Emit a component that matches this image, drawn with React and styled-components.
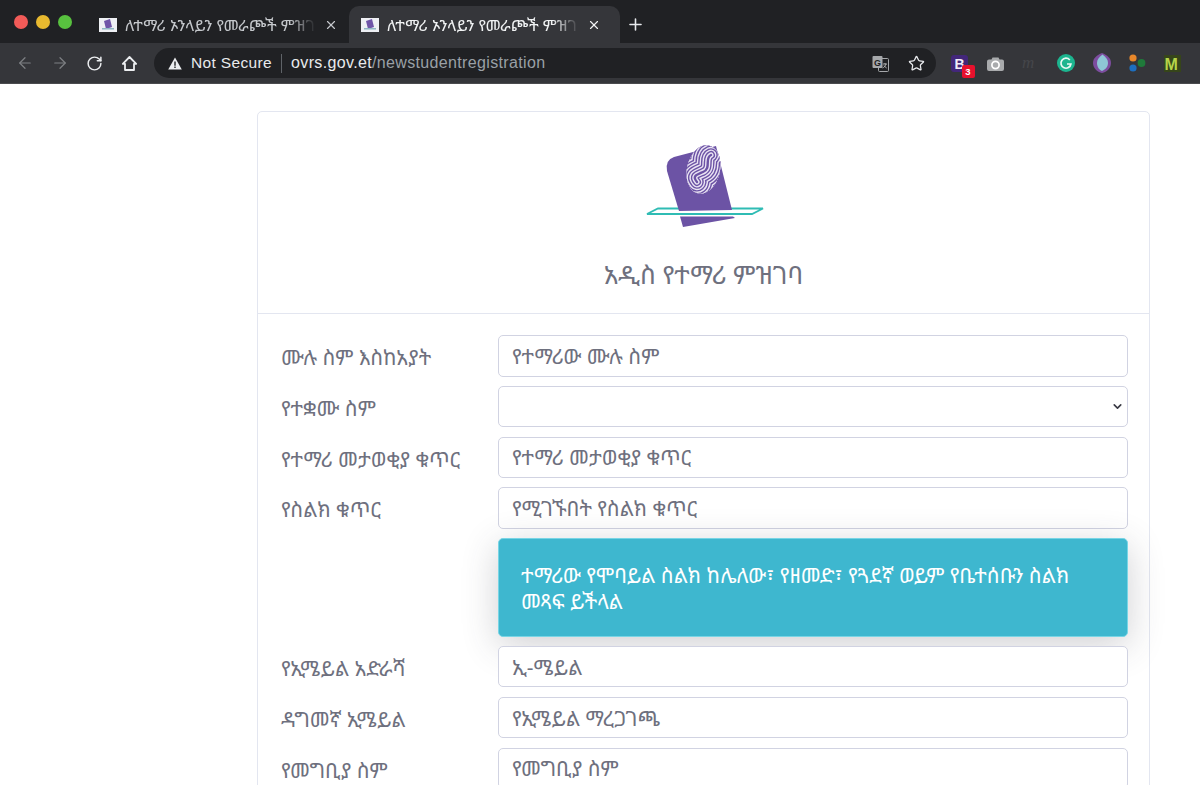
import React from 'react';
import styled, { createGlobalStyle } from 'styled-components';
import { ArrowLeft, ArrowRight, RotateCw, Star, X, Plus, ChevronDown } from 'lucide-react';

const Global = createGlobalStyle`
  html, body { margin: 0; padding: 0; background: #fff; height: 785px; overflow: hidden; }
  * { box-sizing: border-box; }
  body { font-family: "Noto Sans", "Noto Sans Ethiopic", "DejaVu Sans", "Liberation Sans", sans-serif; }
`;

const Frame = styled.div`width: 1200px; height: 785px; overflow: hidden; display: flex; flex-direction: column;`;
const TabStrip = styled.div`height: 43px; background: #202124; display: flex; align-items: flex-end; padding-left: 14px; flex: none;`;
const Lights = styled.div`display: flex; gap: 8px; align-self: flex-start; margin-top: 15px; width: 73px; flex: none;`;
const Light = styled.span`width: 14px; height: 14px; border-radius: 50%; background: ${p => p.$c};`;
const Tab = styled.div`
  width: ${p => p.$active ? '271px' : '262px'}; height: 37px; display: flex; align-items: center; padding: 0 ${p => p.$active ? '19px' : '11px'} 0 12px; gap: 8px;
  background: ${p => p.$active ? '#35363a' : 'transparent'};
  border-radius: 10px 10px 0 0; color: ${p => p.$active ? '#f1f3f4' : '#c5c8cc'};
`;
const TabTitle = styled.span`
  flex: 1; white-space: nowrap; font-size: 16px; line-height: 22px;
  mask-image: linear-gradient(90deg, #000 86%, transparent 100%);
`;
const Fav = styled.svg`width: 18px; height: 14px; flex: none;`;
const NewTab = styled.div`margin-left: 6px; height: 37px; display: flex; align-items: center; color: #e8eaed;`;
const Toolbar = styled.div`height: 41px; background: #35363a; border-bottom: 1px solid #4a4b4e; display: flex; align-items: center; flex: none; padding-left: 7px;`;
const NavIcons = styled.div`display: flex; align-items: center; width: 147px; flex: none;`;
const NavBtn = styled.span`display: flex; justify-content: center; width: 35px; color: ${p => p.$dim ? '#7e8084' : '#eceef0'};`;
const Omni = styled.div`
  width: 782px; height: 30px; border-radius: 15px; background: #202124; display: flex; align-items: center; padding: 0 11px 0 14px; flex: none;
  font-family: "Liberation Sans", sans-serif; font-size: 15.5px; letter-spacing: .35px;
`;
const Secure = styled.span`color: #e8eaed; margin-left: 9px;`;
const Sep = styled.span`width: 1px; height: 19px; background: #5f6368; margin: 0 9px;`;
const Host = styled.span`color: #e8eaed; font-size: 16px;`;
const UrlPath = styled.span`color: #9aa0a6; flex: 1; font-size: 16px;`;
const OmniEnd = styled.div`display: flex; align-items: center; gap: 19px; color: #e8eaed;`;
const Exts = styled.div`display: flex; align-items: center; flex: 1; padding-left: 6px;`;
const Ext = styled.div`width: 35.5px; height: 24px; flex: none; display: flex; align-items: center; justify-content: center; position: relative;`;
const Badge = styled.span`
  position: absolute; right: 3px; bottom: -3px; width: 13px; height: 13px; background: #e8112d; border-radius: 2px; color: #fff;
  font: 700 9.5px/13px "Liberation Sans", sans-serif; text-align: center;
`;

const Page = styled.main`flex: 1; padding: 27px 50px 0 257px; background: #fff; color: #6e707e;`;
const Card = styled.section`border: 1px solid #e3e6f0; border-radius: 5px; background: #fff;`;
const CardHead = styled.header`height: 202px; border-bottom: 1px solid #e3e6f0; padding-top: 28px; display: flex; flex-direction: column; align-items: center;`;
const Title = styled.h1`margin: 22px 0 0; font-size: 25.7px; line-height: 36px; font-weight: 400; color: #6e707e;`;
const CardBody = styled.div`padding: 21px 21px 0 23px; display: grid; grid-template-columns: 217px 1fr; row-gap: 9.3px; align-items: start;`;
const Label = styled.label`font-size: 20.8px; line-height: 27px; color: #6e707e; padding-top: 9px; white-space: nowrap;`;
const Input = styled.input`
  width: 100%; height: 41.5px; border: 1px solid #d1d3e2; border-radius: 5px; background: #fff; padding: 0 13px;
  font: inherit; font-size: 20.8px; color: #6e707e; outline: none; display: block;
  &::placeholder { color: #6e707e; opacity: 1; }
`;
const SelectBox = styled.div`
  width: 100%; height: 41.5px; border: 1px solid #d1d3e2; border-radius: 5px; background: #fff; display: flex; align-items: center; justify-content: flex-end; padding-right: 3px; color: #3a3b45;
`;
const Alert = styled.div`
  grid-column: 2; min-height: 98.5px; background: #3eb7cf; border: 1px solid #78d5e5; border-radius: 5px; color: #fff; padding: 23px 22px 0;
  font-size: 20.8px; line-height: 26px; box-shadow: 0 8px 36px rgba(58,59,69,.24);
`;

const TabFav = () => (
  <Fav viewBox="0 0 18 14">
    <rect width="18" height="14" fill="#eef0f4" />
    <path d="M5 3l6-2 2 8-6 2z" fill="#6f55a8" />
    <path d="M3 10h12v1.5H3z" fill="#8fb7c4" />
  </Fav>
);

const tabText = 'ለተማሪ ኦንላይን የመራጮች ምዝገ';
const fields = [
  ['ሙሉ ስም እስከአያት', 'የተማሪው ሙሉ ስም'],
  ['የተቋሙ ስም', null],
  ['የተማሪ መታወቂያ ቁጥር', 'የተማሪ መታወቂያ ቁጥር'],
  ['የስልክ ቁጥር', 'የሚገኙበት የስልክ ቁጥር'],
];
const fields2 = [
  ['የኢሜይል አድራሻ', 'ኢ-ሜይል'],
  ['ዳግመኛ ኢሜይል', 'የኢሜይል ማረጋገጫ'],
  ['የመግቢያ ስም', 'የመግቢያ ስም'],
];

const ridgeWidths = Array.from({ length: 18 }, (_, i) => 50 - i * 2.8);
const spine = 'M711 155 C 704 158 712 168 703 172 C 696 175 692 176 697 182';

const Logo = () => (
  <svg width="130" height="95" viewBox="639 140 130 95" style={{ flex: 'none' }}>
    <defs>
      <clipPath id="fp"><ellipse cx="703.5" cy="169.5" rx="16.5" ry="24.5" transform="rotate(13 703.5 169.5)" /></clipPath>
    </defs>
    <path d="M647 214 L658 208.5 L763 208.5 L752 214Z" fill="none" stroke="#2fbcb4" strokeWidth="1.8" />
    <path d="M674 157 L716 146 L732 210 L679 211 L667 171 Q665 160 674 157Z" fill="#6c53a5" />
    <path d="M680 216.5 L733 216.5 L735 218 L683 227Z" fill="#6c53a5" />
    <g clipPath="url(#fp)" fill="none" strokeLinecap="round">
      {ridgeWidths.map((w, i) => (
        <path key={w} d={spine} strokeWidth={w} stroke={i % 2 ? '#6c53a5' : '#e9e3f3'} />
      ))}
    </g>
  </svg>
);

export default function App() {
  return (
    <Frame>
      <Global />
      <TabStrip>
        <Lights>
          <Light $c="#f25b58" /><Light $c="#e8b92f" /><Light $c="#58c13f" />
        </Lights>
        <Tab><TabFav /><TabTitle>{tabText}</TabTitle><X size={14} strokeWidth={2} /></Tab>
        <Tab $active><TabFav /><TabTitle>{tabText}</TabTitle><X size={14} strokeWidth={2} /></Tab>
        <NewTab><Plus size={19} strokeWidth={2} /></NewTab>
      </TabStrip>
      <Toolbar>
        <NavIcons>
          <NavBtn $dim><ArrowLeft size={18} strokeWidth={1.6} /></NavBtn>
          <NavBtn $dim><ArrowRight size={18} strokeWidth={1.6} /></NavBtn>
          <NavBtn><RotateCw size={17} strokeWidth={2.1} /></NavBtn>
          <NavBtn>
            <svg width="17" height="17" viewBox="0 0 17 17">
              <path d="M8.5 2 L1.8 8.8 H4 V15 H13 V8.8 H15.2Z" fill="none" stroke="currentColor" strokeWidth="1.8" strokeLinejoin="round" />
            </svg>
          </NavBtn>
        </NavIcons>
        <Omni>
          <svg width="14" height="13" viewBox="0 0 14 13">
            <path d="M7 0.5 L13.8 12.5 H0.2Z" fill="#eceef0" />
            <path d="M6.3 4.5h1.4v4.2H6.3zM6.3 9.6h1.4v1.4H6.3z" fill="#202124" />
          </svg>
          <Secure>Not Secure</Secure>
          <Sep />
          <Host>ovrs.gov.et</Host>
          <UrlPath>/newstudentregistration</UrlPath>
          <OmniEnd>
            <svg width="17" height="17" viewBox="0 0 17 17">
              <rect x="6.5" y="3.5" width="10" height="13" rx="1" fill="#202124" stroke="#a6a8ab" />
              <rect x="0.5" y="1" width="10" height="12" rx="1" fill="#a6a8ab" />
              <text x="2" y="10.5" fontSize="9" fontWeight="700" fill="#202124" fontFamily="Liberation Sans">G</text>
              <path d="M11 9h4M13 8v1M14 9c-.5 2-2 3.500-3.500 4M12 10.500c.6 1 1.500 2 2.700 2.500" fill="none" stroke="#c8cacc" strokeWidth=".8" />
            </svg>
            <Star size={17} strokeWidth={1.8} />
          </OmniEnd>
        </Omni>
        <Exts>
          <Ext>
            <svg width="17" height="17" viewBox="0 0 17 17">
              <rect width="17" height="17" rx="3" fill="#43277a" />
              <text x="3.500" y="13.500" fontSize="14" fontWeight="700" fill="#f2eef8" fontFamily="Liberation Sans">B</text>
            </svg>
            <Badge>3</Badge>
          </Ext>
          <Ext>
            <svg width="17" height="15" viewBox="0 0 17 15">
              <path d="M5.500 1.500h6l1 2H15a2 2 0 0 1 2 2V13a2 2 0 0 1-2 2H2a2 2 0 0 1-2-2V5.500a2 2 0 0 1 2-2h2.500z" fill="#a9abad" />
              <circle cx="8.500" cy="9" r="3.600" fill="none" stroke="#fff" strokeWidth="1.700" />
            </svg>
          </Ext>
          <Ext>
            <svg width="24" height="18" viewBox="0 0 24 18">
              <text x="3" y="14" fontSize="17" fontStyle="italic" fill="#45464a" fontFamily="Liberation Serif">m</text>
            </svg>
          </Ext>
          <Ext>
            <svg width="18" height="18" viewBox="0 0 18 18">
              <circle cx="9" cy="9" r="9" fill="#1cb58f" />
              <path d="M12.800 6A5 5 0 1 0 13.900 10H10" fill="none" stroke="#e8f8f3" strokeWidth="1.700" />
            </svg>
          </Ext>
          <Ext>
            <svg width="18" height="20" viewBox="0 0 18 20">
              <path d="M9 0c5 2 9 5 9 10s-4 9-9 10c-5-1-9-5-9-10S4 2 9 0z" fill="#7d4d9f" />
              <path d="M9.500 1.500c3.500 2.500 5.500 5 5.500 8.500s-2.400 6.500-6 8c-3-1-5-4.500-5-8s2-6 5.500-8.500z" fill="#8ec6d5" />
            </svg>
          </Ext>
          <Ext>
            <svg width="18" height="18" viewBox="0 0 18 18">
              <circle cx="5" cy="4" r="3.600" fill="#e8872a" />
              <circle cx="5" cy="14" r="3.600" fill="#1d6fc0" />
              <circle cx="13.500" cy="9" r="3.900" fill="#1f7a3a" />
            </svg>
          </Ext>
          <Ext>
            <svg width="17" height="17" viewBox="0 0 17 17">
              <rect width="17" height="17" fill="#36451a" />
              <text x="0.500" y="15" fontSize="16" fontWeight="700" fill="#b5d44a" fontFamily="Liberation Sans">M</text>
            </svg>
          </Ext>
          <Ext>
            <svg width="12" height="16" viewBox="0 0 12 16">
              <ellipse cx="7" cy="8" rx="7" ry="6" fill="#8bbd5a" />
            </svg>
          </Ext>
        </Exts>
      </Toolbar>
      <Page>
        <Card>
          <CardHead>
            <Logo />
            <Title>አዲስ የተማሪ ምዝገባ</Title>
          </CardHead>
          <CardBody>
            {fields.map(([label, ph]) => (
              <React.Fragment key={label}>
                <Label>{label}</Label>
                {ph ? <Input placeholder={ph} /> : <SelectBox><ChevronDown size={13} strokeWidth={3} /></SelectBox>}
              </React.Fragment>
            ))}
            <Alert>ተማሪው የሞባይል ስልክ ከሌለው፣ የዘመድ፣ የጓደኛ ወይም የቤተሰቡን ስልክ መጻፍ ይችላል</Alert>
            {fields2.map(([label, ph]) => (
              <React.Fragment key={label}>
                <Label>{label}</Label>
                <Input placeholder={ph} />
              </React.Fragment>
            ))}
          </CardBody>
        </Card>
      </Page>
    </Frame>
  );
}
